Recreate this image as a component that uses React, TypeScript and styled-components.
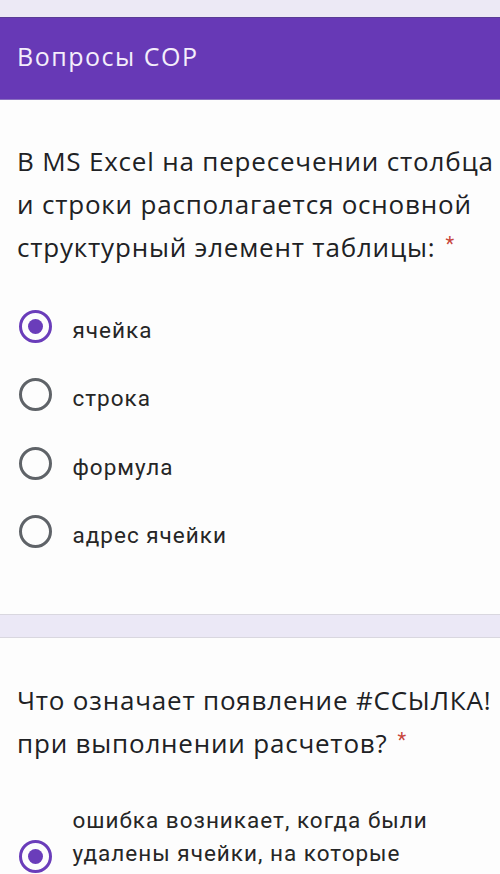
import React from "react";
import styled, { createGlobalStyle } from "styled-components";

const Global = createGlobalStyle`
  html, body { margin: 0; padding: 0; background: #fdfdfd; }
  body { font-family: Roboto, "Noto Sans", Arial, sans-serif; }
`;

const Page = styled.div`
  width: 500px;
  height: 874px;
  overflow: hidden;
  display: flex;
  flex-direction: column;
`;

const TopStrip = styled.div`
  height: 18px;
  flex: none;
  background: #ece9f5;
  border-bottom: 1px solid #5a3c96;
  box-sizing: border-box;
`;

const Header = styled.header`
  height: 82px;
  flex: none;
  background: #6739b6;
  display: flex;
  align-items: center;
  padding: 0 17px 5px;
  box-sizing: border-box;
  border-bottom: 1px solid #8a6fc0;
`;

const Title = styled.h1`
  margin: 0;
  font-family: "Open Sans", Roboto, sans-serif;
  font-weight: 400;
  font-size: 25px;
  line-height: 34px;
  letter-spacing: 1.5px;
  color: #f4eefb;
`;

const Card = styled.section<{ $top: number; $bottom: number }>`
  flex: none;
  background: #fdfdfd;
  padding: ${(p) => p.$top}px 4px ${(p) => p.$bottom}px 17px;
`;

const Question = styled.div`
  font-family: "Open Sans", Roboto, sans-serif;
  font-size: 26px;
  line-height: 43px;
  color: #202124;
  letter-spacing: 0.8px;
  white-space: nowrap;
`;

const Star = styled.span`
  color: #c8463c;
  font-family: Roboto, sans-serif;
  font-size: 20px;
  line-height: 1;
  margin-left: 10px;
  vertical-align: 6px;
`;

const Options = styled.div<{ $top: number }>`
  display: flex;
  flex-direction: column;
  margin-top: ${(p) => p.$top}px;
`;

const Option = styled.label`
  display: flex;
  align-items: center;
  gap: 21px;
  min-height: 68.3px;
`;

const Radio = styled.span<{ $on?: boolean; $nudge: number }>`
  flex: none;
  width: 33px;
  height: 33px;
  margin-left: 1.5px;
  margin-top: ${(p) => (p.$nudge > 0 ? p.$nudge * 2 : 0)}px;
  margin-bottom: ${(p) => (p.$nudge < 0 ? -p.$nudge * 2 : 0)}px;
  box-sizing: border-box;
  border-radius: 50%;
  border: 3.5px solid ${(p) => (p.$on ? "#6a3dba" : "#5f6368")};
  display: flex;
  align-items: center;
  justify-content: center;
  &::after {
    content: "";
    width: 15px;
    height: 15px;
    border-radius: 50%;
    background: #6a3dba;
    display: ${(p) => (p.$on ? "block" : "none")};
  }
`;

const Label = styled.span<{ $lh: number }>`
  font-family: Roboto, "Noto Sans", sans-serif;
  font-size: 22.5px;
  letter-spacing: 1px;
  line-height: ${(p) => p.$lh}px;
  color: #262626;
  white-space: nowrap;
`;

const Separator = styled.div`
  height: 22px;
  flex: none;
  background: #ebe8f6;
  border-top: 1px solid #d9d7df;
  border-bottom: 1px solid #d9d7df;
  box-sizing: content-box;
`;

const choices = ["ячейка", "строка", "формула", "адрес ячейки"];

export default function App() {
  return (
    <Page>
      <Global />
      <TopStrip />
      <Header>
        <Title>Вопросы СОР</Title>
      </Header>
      <Card $top={40} $bottom={45}>
        <Question>
          В MS Excel на пересечении столбца
          <br />
          и строки располагается основной
          <br />
          структурный элемент таблицы:<Star>*</Star>
        </Question>
        <Options $top={27}>
          {choices.map((c, i) => (
            <Option key={c}>
              <Radio $on={i === 0} $nudge={-3.5} />
              <Label $lh={34}>{c}</Label>
            </Option>
          ))}
        </Options>
      </Card>
      <Separator />
      <Card $top={41} $bottom={0}>
        <Question>
          Что означает появление #ССЫЛКА!
          <br />
          при выполнении расчетов?<Star>*</Star>
        </Question>
        <Options $top={39}>
          <Option>
            <Radio $on $nudge={2.7} />
            <Label $lh={33}>
              ошибка возникает, когда были
              <br />
              удалены ячейки, на которые
              <br />
              ссылалась формула
            </Label>
          </Option>
        </Options>
      </Card>
    </Page>
  );
}
